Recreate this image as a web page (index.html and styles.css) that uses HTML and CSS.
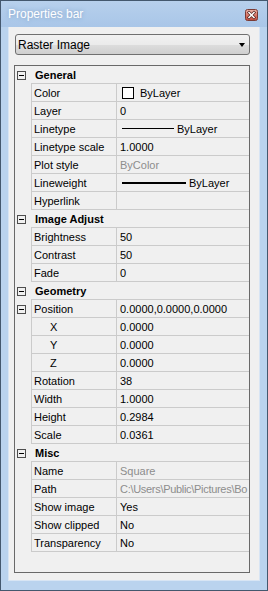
FILE: index.html
```html
<!DOCTYPE html>
<html>
<head>
    <title>Properties bar</title>
    <link rel="stylesheet" href="styles.css">
</head>
<body>
    <div class="window">
        <div class="titlebar">
            <span class="title">Properties bar</span>
            <span class="close-button">
                <svg width="13" height="12" viewBox="0 0 13 12">
                    <defs>
                        <linearGradient id="closeFill" x1="0" y1="0" x2="0" y2="1">
                            <stop offset="0" stop-color="#f0b8ac"/>
                            <stop offset="0.5" stop-color="#d8786a"/>
                            <stop offset="1" stop-color="#c24c3e"/>
                        </linearGradient>
                    </defs>
                    <rect x="0.5" y="0.5" width="12" height="11" rx="2" fill="url(#closeFill)" stroke="#7a3b35"/>
                    <path d="M4 3.5 L9 8.5 M9 3.5 L4 8.5" stroke="#5a2a26" stroke-width="3" stroke-linecap="square"/>
                    <path d="M4 3.5 L9 8.5 M9 3.5 L4 8.5" stroke="#ffffff" stroke-width="1.5" stroke-linecap="square"/>
                </svg>
            </span>
        </div>
        <div class="client">
            <div class="dropdown">
                <span>Raster Image</span>
                <span class="dropdown-arrow"></span>
            </div>
            <div class="grid">
                <div class="row header"><span class="indent"><span class="toggle"></span></span><span class="head-label">General</span></div>
                <div class="row"><span class="indent"></span><span class="name">Color</span><span class="value"><span class="swatch"></span>ByLayer</span></div>
                <div class="row"><span class="indent"></span><span class="name">Layer</span><span class="value">0</span></div>
                <div class="row"><span class="indent"></span><span class="name">Linetype</span><span class="value"><span class="line-sample thin"></span>ByLayer</span></div>
                <div class="row"><span class="indent"></span><span class="name">Linetype scale</span><span class="value">1.0000</span></div>
                <div class="row"><span class="indent"></span><span class="name">Plot style</span><span class="value muted">ByColor</span></div>
                <div class="row"><span class="indent"></span><span class="name">Lineweight</span><span class="value"><span class="line-sample thick"></span>ByLayer</span></div>
                <div class="row"><span class="indent"></span><span class="name">Hyperlink</span><span class="value"></span></div>

                <div class="row header"><span class="indent"><span class="toggle"></span></span><span class="head-label">Image Adjust</span></div>
                <div class="row"><span class="indent"></span><span class="name">Brightness</span><span class="value">50</span></div>
                <div class="row"><span class="indent"></span><span class="name">Contrast</span><span class="value">50</span></div>
                <div class="row"><span class="indent"></span><span class="name">Fade</span><span class="value">0</span></div>

                <div class="row header"><span class="indent"><span class="toggle"></span></span><span class="head-label">Geometry</span></div>
                <div class="row"><span class="indent"><span class="toggle"></span></span><span class="name">Position</span><span class="value">0.0000,0.0000,0.0000</span></div>
                <div class="row"><span class="indent"></span><span class="name sub">X</span><span class="value">0.0000</span></div>
                <div class="row"><span class="indent"></span><span class="name sub">Y</span><span class="value">0.0000</span></div>
                <div class="row"><span class="indent"></span><span class="name sub">Z</span><span class="value">0.0000</span></div>
                <div class="row"><span class="indent"></span><span class="name">Rotation</span><span class="value">38</span></div>
                <div class="row"><span class="indent"></span><span class="name">Width</span><span class="value">1.0000</span></div>
                <div class="row"><span class="indent"></span><span class="name">Height</span><span class="value">0.2984</span></div>
                <div class="row"><span class="indent"></span><span class="name">Scale</span><span class="value">0.0361</span></div>

                <div class="row header"><span class="indent"><span class="toggle"></span></span><span class="head-label">Misc</span></div>
                <div class="row"><span class="indent"></span><span class="name">Name</span><span class="value muted">Square</span></div>
                <div class="row"><span class="indent"></span><span class="name">Path</span><span class="value muted clip">C:\Users\Public\Pictures\Bo</span></div>
                <div class="row"><span class="indent"></span><span class="name">Show image</span><span class="value">Yes</span></div>
                <div class="row"><span class="indent"></span><span class="name">Show clipped</span><span class="value">No</span></div>
                <div class="row"><span class="indent"></span><span class="name">Transparency</span><span class="value">No</span></div>
            </div>
        </div>
    </div>
</body>
</html>
```

FILE: styles.css
```css
body {
    margin: 0;
    font-family: "Liberation Sans", Arial, sans-serif;
}

.window {
    width: 268px;
    height: 591px;
    box-sizing: border-box;
    border: 1px solid #44586e;
    background-color: #bad3ee;
    padding: 0 7px 9px 7px;
    display: flex;
    flex-direction: column;
}

.titlebar {
    height: 25px;
    flex-shrink: 0;
    display: flex;
    align-items: center;
    justify-content: space-between;
    background: linear-gradient(#b7d0ec, #a9c6e8);
    margin: 0 -7px;
    padding: 0 9px 1px 7px;
}

.title {
    color: #ffffff;
    font-family: "Liberation Sans", Arial, sans-serif;
    font-size: 12px;
    text-shadow: 0 0 4px #7f9dc2;
}

.close-button {
    width: 13px;
    height: 12px;
    display: flex;
    margin-top: 2px;
}

.client {
    flex: 1;
    background-color: #f0f0f0;
    border: 1px solid #d8e5f4;
    border-top: none;
    padding: 7px 9px 0 5px;
    display: flex;
    flex-direction: column;
}

.dropdown {
    height: 21px;
    margin-left: 1px;
    box-sizing: border-box;
    border: 1px solid #707070;
    border-radius: 3px;
    background: linear-gradient(#f2f2f2 0%, #ebebeb 50%, #dddddd 51%, #cfcfcf 100%);
    display: flex;
    align-items: center;
    justify-content: space-between;
    padding: 0 4px 0 2px;
    font-size: 12px;
    color: #000000;
}

.dropdown-arrow {
    width: 0;
    height: 0;
    border-left: 3.5px solid transparent;
    border-right: 3.5px solid transparent;
    border-top: 4px solid #000000;
}

.grid {
    margin-top: 10px;
    height: 508px;
    box-sizing: border-box;
    border: 1px solid #696969;
    font-size: 11px;
    color: #000000;
}

.row {
    display: grid;
    grid-template-columns: 16px 85px 1fr;
    height: 18px;
}

.row > span {
    display: flex;
    align-items: center;
    white-space: nowrap;
    overflow: hidden;
}

.name,
.value,
.head-label {
    border-bottom: 1px solid #cbcbcb;
}

.name {
    border-left: 1px solid #cbcbcb;
    padding-left: 2px;
}

.name.sub {
    padding-left: 18px;
}

.value {
    border-left: 1px solid #cbcbcb;
    padding-left: 3px;
}

/* path is long, squeeze it a little like the narrow UI font */
.value.clip {
    letter-spacing: -0.3px;
}

.muted {
    color: #8d8d8d;
}

.header .head-label {
    grid-column: 2 / 4;
    font-weight: bold;
    padding-left: 4px;
}

.toggle {
    width: 9px;
    height: 9px;
    box-sizing: border-box;
    border: 1px solid #4d4d4d;
    margin-left: 2px;
    position: relative;
    flex-shrink: 0;
}

.toggle::after {
    content: "";
    position: absolute;
    left: 1px;
    right: 1px;
    top: 3px;
    height: 1px;
    background-color: #000000;
}

.swatch {
    width: 12px;
    height: 12px;
    box-sizing: border-box;
    border: 1px solid #000000;
    background-color: #ffffff;
    margin: 0 6px 0 2px;
    flex-shrink: 0;
}

.line-sample {
    flex-shrink: 0;
    background-color: #000000;
    margin-left: 2px;
    margin-right: 3px;
}

.line-sample.thin {
    width: 52px;
    height: 1px;
}

.line-sample.thick {
    width: 64px;
    height: 2px;
}
```
